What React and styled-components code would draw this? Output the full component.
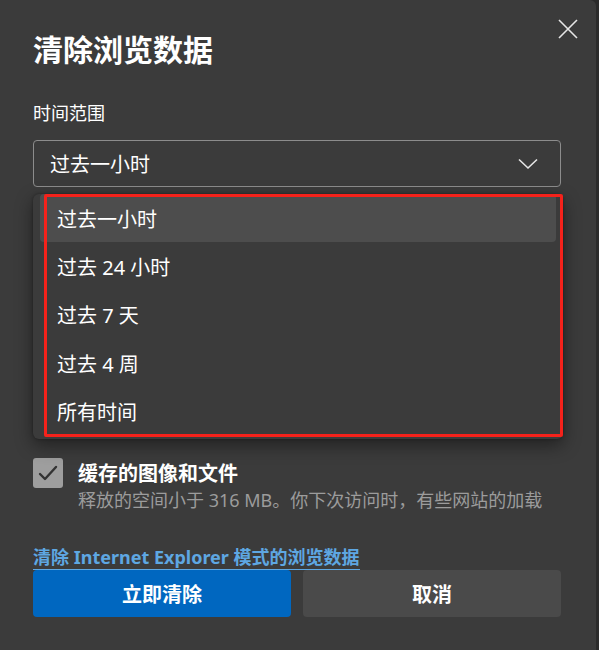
import React from "react";
import styled, { createGlobalStyle } from "styled-components";

const Global = createGlobalStyle`
  html, body { margin: 0; padding: 0; background: #2b2b2b; }
  body { font-family: "Noto Sans", "Noto Sans CJK SC", sans-serif; }
  * { box-sizing: border-box; }
`;

const Page = styled.div`
  width: 599px;
  height: 650px;
  display: flex;
  background: #2b2b2b;
`;

const Dialog = styled.div`
  width: 596px;
  height: 650px;
  background: #3b3b3b;
  border-top-right-radius: 6px;
  padding: 18px 35px 0 33px;
  display: flex;
  flex-direction: column;
  color: #ffffff;
`;

const Header = styled.div`
  display: flex;
  justify-content: space-between;
  align-items: flex-start;
`;

const Title = styled.h1`
  margin: 10px 0 0;
  font-size: 30px;
  line-height: 40px;
  font-weight: 700;
  font-family: "Noto Sans CJK SC", sans-serif;
`;

const CloseButton = styled.button`
  width: 22px;
  height: 22px;
  margin-right: -18px;
  padding: 0;
  border: none;
  background: transparent;
  display: flex;
  align-items: center;
  justify-content: center;
`;

const Label = styled.div`
  margin-top: 31px;
  font-size: 18px;
  line-height: 26px;
  font-family: "Noto Sans CJK SC", sans-serif;
`;

const SelectWrap = styled.div`
  position: relative;
  margin-top: 15px;
`;

const Select = styled.div`
  height: 47px;
  border: 1px solid #8c8c8c;
  border-radius: 4px;
  display: flex;
  align-items: center;
  justify-content: space-between;
  padding: 0 22px 0 16px;
  font-size: 20px;
  font-family: "Noto Sans CJK SC", sans-serif;
`;

const Menu = styled.div`
  position: absolute;
  top: 54px;
  left: 0;
  width: 530px;
  background: #3b3b3b;
  border-radius: 6px;
  padding: 0 7px 3px 7px;
  box-shadow: 0 6px 18px rgba(0, 0, 0, 0.45), 0 0 3px rgba(0, 0, 0, 0.35);
  z-index: 5;
`;

const Highlight = styled.div`
  position: absolute;
  top: 0;
  left: 11px;
  right: 0;
  bottom: 2px;
  border: 3px solid #f5221b;
  border-radius: 2px;
  pointer-events: none;
`;

const MenuItem = styled.div`
  height: ${(p) => (p.$first ? "48px" : "48.5px")};
  display: flex;
  align-items: center;
  padding-left: 17px;
  border-radius: 4px;
  font-size: 20px;
  font-family: "Noto Sans", "Noto Sans CJK SC", sans-serif;
  background: ${(p) => (p.$active ? "#4d4d4d" : "transparent")};
`;

const List = styled.div`
  margin-top: 271px;
  height: 54px;
  display: flex;
  flex-direction: column;
`;

const Row = styled.div`
  display: flex;
  gap: 15px;
  align-items: flex-start;
`;

const Check = styled.div`
  flex: none;
  width: 30px;
  height: 30px;
  border-radius: 3px;
  background: #9e9e9e;
  display: flex;
  align-items: center;
  justify-content: center;
`;

const RowText = styled.div`
  display: flex;
  flex-direction: column;
`;

const RowTitle = styled.div`
  font-size: 20px;
  line-height: 30px;
  font-weight: 700;
  font-family: "Noto Sans CJK SC", sans-serif;
`;

const RowDesc = styled.div`
  font-size: 18px;
  line-height: 24px;
  color: #9c9c9c;
  white-space: nowrap;
  font-family: "Noto Sans", "Noto Sans CJK SC", sans-serif;
`;

const Link = styled.a`
  margin-top: 34px;
  align-self: flex-start;
  font-size: 18px;
  line-height: 23px;
  font-weight: 700;
  color: #5ea7e2;
  text-decoration: none;
  border-bottom: 1px solid #5ea7e2;
  font-family: "Noto Sans", "Noto Sans CJK SC", sans-serif;
`;

const Buttons = styled.div`
  display: grid;
  grid-template-columns: 1fr 1fr;
  gap: 12px;
`;

const Button = styled.button`
  height: 47px;
  border: none;
  border-radius: 4px;
  background: ${(p) => (p.$primary ? "#0067c0" : "#4a4a4a")};
  color: #ffffff;
  font-size: 20px;
  font-weight: 700;
  font-family: "Noto Sans CJK SC", sans-serif;
`;

const Checkmark = () => (
  <svg width="20" height="16" viewBox="0 0 20 16">
    <path d="M2 9 L7 14 L18 2" fill="none" stroke="#333" strokeWidth="2.4" strokeLinecap="round" strokeLinejoin="round" />
  </svg>
);

const items = ["过去一小时", "过去 24 小时", "过去 7 天", "过去 4 周", "所有时间"];

export default function App() {
  return (
    <Page>
      <Global />
      <Dialog>
        <Header>
          <Title>清除浏览数据</Title>
          <CloseButton aria-label="关闭">
            <svg width="20" height="20" viewBox="0 0 20 20">
              <path d="M1 1 L19 19 M19 1 L1 19" stroke="#e6e6e6" strokeWidth="1.6" />
            </svg>
          </CloseButton>
        </Header>
        <Label>时间范围</Label>
        <SelectWrap>
          <Select>
            <span>过去一小时</span>
            <svg width="20" height="12" viewBox="0 0 20 12">
              <path d="M1 1.5 L10 10 L19 1.5" fill="none" stroke="#e6e6e6" strokeWidth="1.6" />
            </svg>
          </Select>
          <Menu>
            {items.map((t, i) => (
              <MenuItem key={t} $active={i === 0} $first={i === 0}>
                {t}
              </MenuItem>
            ))}
            <Highlight />
          </Menu>
        </SelectWrap>
        <List>
          <Row>
            <Check>
              <Checkmark />
            </Check>
            <RowText>
              <RowTitle>缓存的图像和文件</RowTitle>
              <RowDesc>释放的空间小于 316 MB。你下次访问时，有些网站的加载</RowDesc>
            </RowText>
          </Row>
        </List>
        <Link href="#">清除 Internet Explorer 模式的浏览数据</Link>
        <Buttons>
          <Button $primary>立即清除</Button>
          <Button>取消</Button>
        </Buttons>
      </Dialog>
    </Page>
  );
}
